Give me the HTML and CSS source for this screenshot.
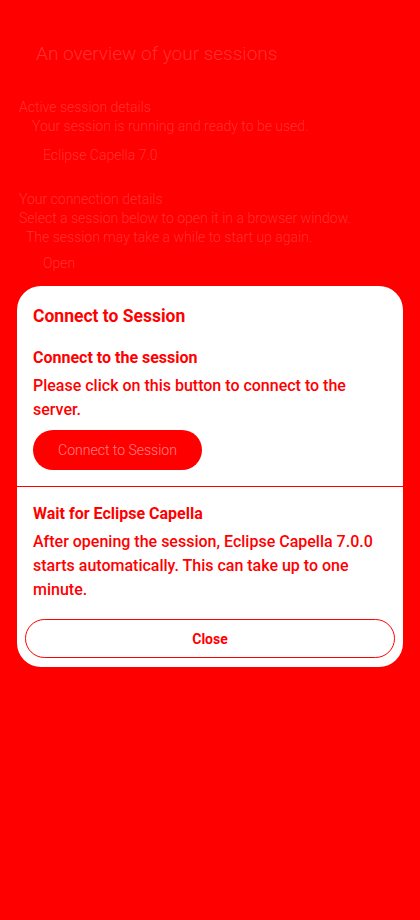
FILE: index.html
```html
<!DOCTYPE html>
<html lang="en">
<head>
<meta charset="utf-8">
<title>Connect to Session</title>
<link rel="stylesheet" href="styles.css">
</head>
<body>
<main class="page">
  <h1 class="page-title">An overview of your sessions</h1>
  <section class="info">
    <p class="info-label">Active session details</p>
    <p class="info-text">Your session is running and ready to be used.</p>
    <p class="info-item">Eclipse Capella 7.0</p>
  </section>
  <section class="info second">
    <p class="info-label">Your connection details</p>
    <p class="info-text wide">Select a session below to open it in a browser window.</p>
    <p class="info-text narrow">The session may take a while to start up again.</p>
    <p class="info-item last">Open</p>
  </section>
</main>

<div class="dialog" role="dialog" aria-labelledby="dlg-title">
  <div class="dialog-body">
    <h2 class="dialog-title" id="dlg-title">Connect to Session</h2>
    <h3 class="step-title">Connect to the session</h3>
    <p class="step-text">Please click on this button to connect to the server.</p>
    <button class="btn-primary" type="button">Connect to Session</button>
  </div>
  <hr class="divider">
  <div class="dialog-body second">
    <h3 class="step-title">Wait for Eclipse Capella</h3>
    <p class="step-text">After opening the session, Eclipse Capella 7.0.0 starts automatically. This can take up to one minute.</p>
  </div>
  <div class="dialog-actions">
    <button class="btn-outline" type="button">Close</button>
  </div>
</div>
</body>
</html>
```

FILE: styles.css
```css
* { box-sizing: border-box; }

html, body {
  margin: 0;
  padding: 0;
  background: #ff0000;
  width: 420px;
  height: 920px;
  overflow: hidden;
  font-family: Roboto, "Liberation Sans", sans-serif;
}

.page {
  padding: 40px 20px 0 19px;
  color: rgba(255, 255, 255, 0.2);
  font-weight: 300;
}

.page-title {
  margin: 0 0 30px 17px;
  font-size: 19px;
  line-height: 28px;
  font-weight: 300;
}

.info { margin: 0 0 25px 0; }

.info p {
  margin: 0;
  font-size: 14px;
  line-height: 19px;
}

.info-text { padding-left: 13px; }
.info-text.wide { padding-left: 0; }
.info-text.narrow { padding-left: 7px; }
.info-item { padding-left: 24px; margin-top: 10px !important; }
.info-item.last { margin-top: 7px !important; }

.dialog {
  position: absolute;
  top: 286px;
  left: 17px;
  width: 386px;
  background: #ffffff;
  border-radius: 24px;
  color: #ff0000;
  overflow: hidden;
}

.dialog-body {
  padding: 18px 16px 16px 16px;
}

.dialog-body.second {
  padding: 15px 16px 0 16px;
}

.dialog-title {
  margin: 0 0 18px 0;
  font-size: 17.5px;
  line-height: 24px;
  font-weight: 700;
}

.step-title {
  margin: 0 0 4px 0;
  font-size: 16px;
  line-height: 24px;
  font-weight: 700;
}

.step-text {
  margin: 0;
  font-size: 16px;
  line-height: 24px;
  font-weight: 500;
}

.btn-primary {
  margin-top: 8px;
  display: inline-flex;
  align-items: center;
  justify-content: center;
  height: 40px;
  width: 169px;
  border: none;
  border-radius: 20px;
  background: #ff0000;
  color: rgba(255, 255, 255, 0.5);
  font-family: Roboto, "Liberation Sans", sans-serif;
  font-size: 14px;
  font-weight: 300;
  padding: 0;
}

.divider {
  margin: 0;
  border: none;
  border-top: 1px solid #ff0000;
  height: 0;
}

.dialog-actions {
  padding: 17px 8px 9px 8px;
}

.btn-outline {
  display: flex;
  align-items: center;
  justify-content: center;
  width: 100%;
  height: 39px;
  border: 1px solid #ff0000;
  border-radius: 20px;
  background: #ffffff;
  color: #ff0000;
  font-family: Roboto, "Liberation Sans", sans-serif;
  font-size: 14px;
  font-weight: 700;
  padding: 0;
}
```
